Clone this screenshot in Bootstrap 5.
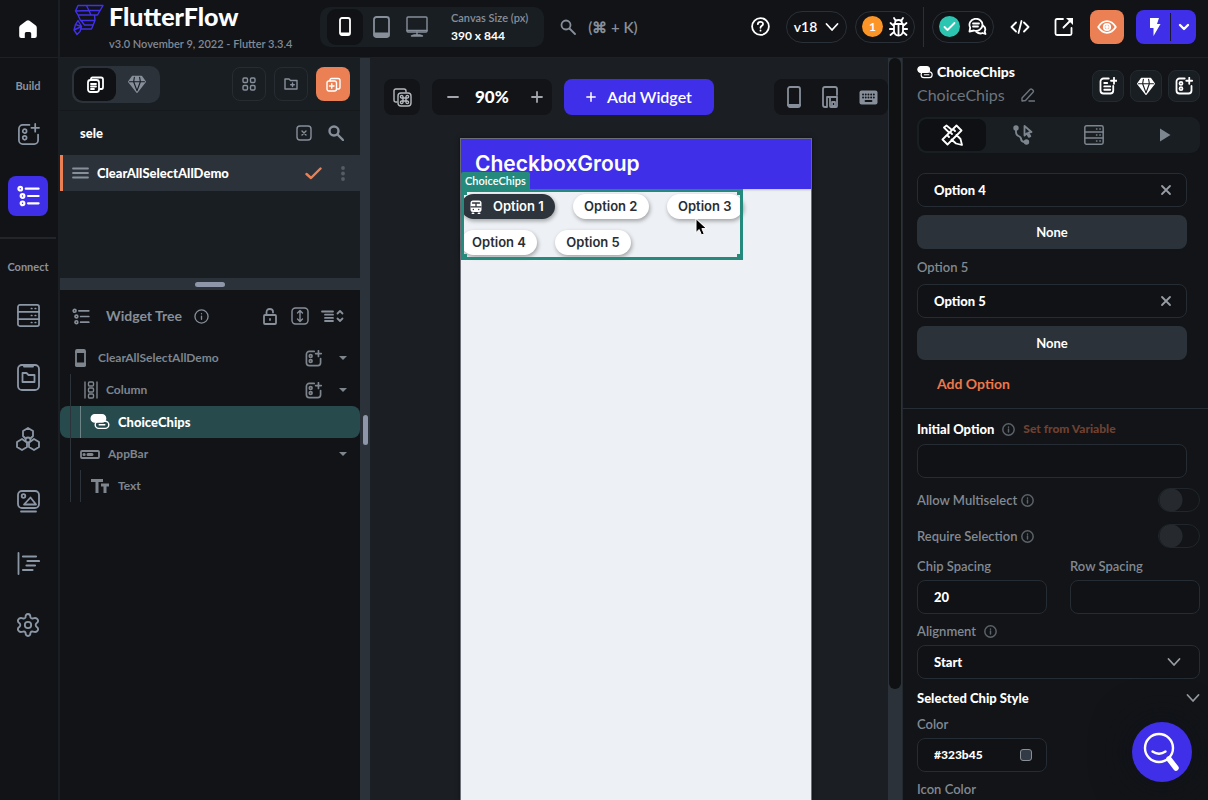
<!DOCTYPE html>
<html lang="en" data-bs-theme="dark">
<head>
<meta charset="utf-8">
<meta name="viewport" content="width=device-width, initial-scale=1">
<title>FlutterFlow</title>
<link rel="stylesheet" href="https://cdn.jsdelivr.net/npm/bootstrap@5.3.0/dist/css/bootstrap.min.css">
<style>
:root{--ink:#111317;--panel:#191e22;--raised:#2b323a;--line:#23282e;--muted:#878f9a;--brand:#3f2fe8;--coral:#ec8055;--frame:#258a7c}
body{font-family:Lato,"Liberation Sans",sans-serif;font-size:13px;line-height:20px;color:#fff;background:var(--ink);overflow:hidden}
svg{display:block;flex:none;fill:none;stroke:currentColor;stroke-width:1.8;stroke-linecap:round;stroke-linejoin:round}
.s-thin{stroke-width:1.4}
.s-bold{stroke-width:2.4}
button,a{color:inherit;text-decoration:none}
.plain{background:none;border:0;padding:0;display:flex;align-items:center;justify-content:center;color:inherit}
.dim{color:var(--muted)}
.solid{fill:currentColor;stroke:none}
/* top bar */
.topbar{height:58px;border-bottom:1px solid #1d2126}
.rail,.home{width:60px;flex:none;border-right:2px solid #1b1f24;padding-right:2px}
.brand-col{width:260px;padding-left:13px}
.brand-name{font-size:25px;font-weight:900;line-height:30px;padding-top:1px}
.version{font-size:11px;line-height:14px;font-weight:600;color:#818994;padding-top:6px}
.devices{background:var(--panel);border-radius:10px;height:40px;padding:2px 16px 2px 7px}
.dev{width:36px;height:36px;border-radius:9px}
.dev.on{background:#101215}
.canvas-size{font-size:12px;line-height:18px;margin-left:16px}
.canvas-size span{font-size:11px}
.pill{height:32px;border:1px solid #2a3037;border-radius:16px}
.dot{width:21px;height:21px;border-radius:50%;display:grid;place-items:center;font-size:12px;font-weight:700}
.vline{width:1px;height:40px;background:#2a3037}
.sq{width:34px;height:34px;border-radius:8px}
.coral{background:var(--coral)}
.run{background:var(--brand);border-radius:8px;height:34px}
/* rail */
.rail-label{height:45px;padding-top:10px;font-size:11px;font-weight:700;line-height:35px;text-align:center;color:#8b929c}
.rail-item{height:62px;width:100%;color:#8c97a6}
.rail-item span{width:40px;height:40px;border-radius:8px;display:grid;place-items:center}
.rail-item.on span{background:var(--brand);color:#fff}
.rail-rule{height:2px;background:#22262b;margin-top:10px}
/* left panel */
.side{width:300px;flex:none}
.pages{background:var(--panel);height:220px}
.tools{height:53px;padding:0 10px 0 12px;border-bottom:1px solid #15191c}
.seg{background:var(--raised);border-radius:10px;padding:2px;height:37px}
.seg button{width:42px;height:33px;border-radius:9px}
.seg .on{background:#0f1114}
.outl{border:1px solid #262c31}
.find{height:43px;padding:0 16px 0 20px}
.find input{background:none;border:0;outline:0;color:#fff;font-weight:900;min-width:0;padding:0}
.page-row{height:36px;background:var(--raised);border-left:3px solid var(--coral);padding:0 12px 0 9px;font-weight:900;margin-top:1px}
.splitter{height:12px;background:var(--raised)}
.splitter i{width:30px;height:5px;border-radius:3px;background:#8d97a9}
.tree-head{height:52px;padding:0 16px 0 12px;font-size:14px;font-weight:700}
.tree{font-size:12px;font-weight:700;color:#7e858d}
.node{height:32px;padding:0 12px;position:relative}
.node .caret{width:10px}
.node.lv1{padding-left:20px}.node.lv2{padding-left:30px}
.node.lv1::before,.node.lv2::before,.node.lv2::after{content:"";position:absolute;top:0;bottom:0;width:1px;left:10px;background:#2d333a}
.node.lv2::after{left:20px}
.node.on{background:#274a4d;border-radius:8px;color:#fff;font-size:13px;font-weight:900}
.node.on::after{background:#6d8385}
.gutter{width:10px;flex:none;background:var(--raised);padding-top:357px}
.gutter i{width:5px;height:30px;border-radius:3px;background:#8d97a9;display:block;margin-left:3px}
/* canvas */
.stage{background:#1b1f24;min-width:0}
.stage-bar{padding:21px 0 0 14px;height:80px}
.box{background:#121417;border-radius:8px;height:36px}
.zoomer{width:120px;margin:0 12px;padding:0 9px 0 15px;color:#a3a7ad}
.zoom-val{font-size:17px;font-weight:900}
.add{background:var(--brand);border-radius:8px;height:36px;width:150px;font-size:16px;font-weight:600;gap:11px}
.previews{width:114px;padding-left:13px;gap:21px}
.phone{width:352px;margin-left:90px;border:1px solid #6d7078;border-bottom:0;background:#edf0f4;color:#23272c;font-family:Inter,"Liberation Sans",sans-serif;box-shadow:0 0 4px #0008}
.appbar{height:50px;background:var(--brand);color:#fff;font-size:21px;font-weight:600;padding:0 14px;line-height:49px;box-shadow:0 1px 2px #0003}
.picked{width:282px;height:71px;padding:5px 0 0;position:relative}
.picked::after{content:"";position:absolute;inset:0;border:3px solid var(--frame);pointer-events:none}
.tag{position:absolute;left:0;top:-17px;height:18px;padding:0 4px;background:var(--frame);color:#fff;font:600 11px/18px Lato,sans-serif;border-radius:2px 2px 0 0}
.corner{position:absolute;width:6px;height:6px;background:var(--frame);z-index:1}
.chips{display:flex;flex-wrap:wrap;gap:11px 18px}
.chip{height:25px;min-width:76px;border:0;border-radius:13px;background:#fff;color:#2a2e34;font-size:13px;font-weight:600;padding:0;box-shadow:1px 2px 4px #0005;line-height:25px}
.chip.on{background:#2d343c;color:#fff;min-width:93px;padding:0 11px 0 9px;display:flex;align-items:center;gap:11px}
.pointer{position:absolute;left:234px;top:29px;z-index:2;stroke-width:1}
.vscroll{width:14px;flex:none;background:var(--raised);padding:0 1px}
.vscroll i{display:block;height:85%;background:#0f1113;border-radius:6px}
/* properties */
.props{width:306px;flex:none;border-left:1px solid #23292f;background:#121417;padding:0 8px 0 14px}
.props-head{padding-top:4px;height:59px}
.props-head .kind{font-size:14px;font-weight:900;line-height:20px}
.props-head .name{font-size:16px;line-height:26px;color:#6d747d}
.mini{width:32px;height:32px;border-radius:8px;background:var(--panel);border:1px solid #242b30}
.tabs{background:var(--panel);border-radius:9px;padding:2px;gap:4px;height:36px}
.tabs button{border-radius:8px;flex:1;color:#7d858e}
.tabs .on{background:#0e1013;color:#fff}
.field{height:34px;border:1px solid #262c33;border-radius:8px;background:#101216;padding:0 14px 0 16px;position:relative}
.field input,.field select{background:none;border:0;outline:0;color:#fff;font-weight:900;font-size:13px;padding:0;min-width:0;width:100%;appearance:none}
.field svg{color:#989da4}
.wide{margin-right:13px}
.none{height:34px;border:0;border-radius:8px;background:var(--raised);color:#fff;font-weight:700;margin-top:8px}
.lab{display:block;line-height:20px;margin-bottom:4px;font-weight:600;color:#828992}
.lab.roomy{margin:8px 0 7px}
.addopt{height:48px;color:#ee774a;font-size:14px;font-weight:700;margin-left:20px}
.rule{height:1px;background:#262d34;margin:0 -8px 0 -14px}
.strong{font-size:13px;font-weight:900;color:#fff}
.fromvar{color:#6f4132;font-size:12px;font-weight:900}
.opt{height:36px;font-weight:600;color:#828992}
.note{color:#5d636a}
.toggle{appearance:none;width:42px;height:24px;border:1px solid #20262b;border-radius:12px;background:radial-gradient(circle at 12px 11px,#262a2e 11px,transparent 12px);margin:0}
.pair{display:grid;grid-template-columns:1fr 1fr;gap:0 23px}
.swatch{width:12px;height:12px;border:1px solid #8a8f96;border-radius:3px;background:#323b45;flex:none}
.help{position:absolute;right:16px;bottom:18px;width:60px;height:60px;border-radius:50%;background:var(--brand);box-shadow:0 0 40px #10121a}
</style>
</head>
<body>
<svg width="0" height="0" class="position-absolute" aria-hidden="true">
<symbol id="addw" viewBox="0 0 24 24"><path d="M13 2H6a4 4 0 0 0-4 4v12a4 4 0 0 0 4 4h12a4 4 0 0 0 4-4v-6M19 1v8M15 5h8"/><circle cx="8" cy="8.500" r="2"/><circle cx="8" cy="15.500" r="2"/></symbol>
<symbol id="list" viewBox="0 0 24 24"><circle cx="3" cy="4" r="2"/><circle cx="5.500" cy="12" r="2"/><circle cx="5.500" cy="20" r="2"/><path d="M9 4h14M11.500 12H23M11.500 20H23"/></symbol>
<symbol id="db" viewBox="0 0 24 24"><rect x="1" y="1" width="22" height="22" rx="2"/><path d="M1 8.300h22M1 15.700h22M15 4.700h.5M19 4.700h.5M15 12h.5M19 12h.5M15 19.300h.5M19 19.300h.5"/></symbol>
<symbol id="info" viewBox="0 0 16 16"><circle cx="8" cy="8" r="7"/><path d="M8 7.500V11M8 5v.1"/></symbol>
<symbol id="gem" viewBox="0 0 24 24"><path fill="currentColor" d="M6 2h12l5 7-11 14L1 9z"/><path stroke="#191e22" stroke-width="1.500" d="M2 9h20M8.500 3 7.500 9 12 21l4.500-12-1-6"/></symbol>
<symbol id="x" viewBox="0 0 12 12"><path d="m2 2 8 8M10 2l-8 8"/></symbol>
<symbol id="chips" viewBox="0 0 24 20"><rect x="1" y="1" width="18" height="9" rx="4.500" fill="currentColor"/><rect x="6" y="9" width="17" height="9" rx="4.500"/><path d="M11 13.500h7"/></symbol>
<symbol id="down" viewBox="0 0 14 10"><path d="m1.500 2 5.500 6 5.500-6"/></symbol>
<symbol id="caret" viewBox="0 0 10 6"><path d="M1 1h8L5 5z" fill="currentColor" stroke="none"/></symbol>
<symbol id="search" viewBox="0 0 16 16"><circle cx="6" cy="6" r="4.500"/><path d="m9.500 9.500 5.500 5.500"/></symbol>
</svg>

<div class="d-flex flex-column vh-100 position-relative">
<header class="topbar d-flex flex-shrink-0">
  <a href="#" class="home d-flex align-items-center justify-content-center" aria-label="Home"><svg class="solid" width="20" height="20" viewBox="0 0 20 20"><path d="M8.500 1.800 2.200 6.600Q1.200 7.400 1.200 8.700v8.200Q1.200 19 3.300 19h3.500v-4.500q0-1.500 1.500-1.500h3.400q1.500 0 1.500 1.500V19h3.500q2.100 0 2.100-2.100V8.700q0-1.300-1-2.100l-6.300-4.800q-1.500-1.200-3 0z"/></svg></a>
  <div class="brand-col d-flex">
    <svg class="s-thin mt-1 me-1" width="32" height="32" viewBox="0 0 32 32" color="#4131e8"><path d="M5 1.500h25L24.500 11H5L2.500 7zM13.500 1.500 18 11M27 6.500H16M3 7l13-.5M5 11l2.500 5.500H22L18.500 25H7.500M21.500 11l.5 5.500M8 16.500l3.500 4.500h8M5 16.500l3.500 6-1.500 5L4 30.500 1 26l1.500-5.500zM2.500 20.500l6 2M1 26l7.500-3.500"/></svg>
    <div class="flex-shrink-0">
      <div class="brand-name">FlutterFlow</div>
      <div class="version">v3.0 November 9, 2022 - Flutter 3.3.4</div>
    </div>
  </div>
  <div class="flex-grow-1 d-flex align-items-center pb-1 pe-2 me-1" style="min-width:0">
    <div class="devices d-flex align-items-center">
      <button class="plain dev on" aria-label="Phone"><svg width="12" height="19" viewBox="0 0 12 19"><rect x="1" y="1" width="10" height="17" rx="2"/><path d="M2 16.500h8"/></svg></button>
      <button class="plain dev dim" aria-label="Tablet"><svg width="17" height="22" viewBox="0 0 17 22"><rect x="1" y="1" width="15" height="20" rx="2.500"/><path fill="currentColor" d="M1.500 17.500h14V20h-14z"/></svg></button>
      <button class="plain dev dim" aria-label="Desktop"><svg class="s-thin" width="22" height="21" viewBox="0 0 22 21"><rect x="1" y="1" width="20" height="15" rx="1"/><path d="M1 14.500h20M11 16v2.500M5.500 20q5.500-2.500 11 0z"/></svg></button>
      <div class="canvas-size"><span class="dim fw-semibold">Canvas Size (px)</span><br><b>390 x 844</b></div>
    </div>
    <button class="plain dim ms-3 gap-2 fw-semibold" style="font-size:15px"><svg width="16" height="16"><use href="#search"/></svg><span class="ms-1">(⌘ + K)</span></button>
    <div class="ms-auto d-flex align-items-center gap-2">
      <button class="plain me-2" aria-label="Help"><svg width="19" height="19" viewBox="0 0 19 19"><circle cx="9.500" cy="9.500" r="8.400"/><path d="M6.800 7.200c.2-3.400 5.400-3 5.200-.1-.1 1.700-2.500 1.700-2.500 3.700M9.500 13.500v.2"/></svg></button>
      <button class="plain pill px-2 gap-2 fw-semibold" style="font-size:14px;width:61px">v18<svg width="14" height="10"><use href="#down"/></svg></button>
      <button class="plain pill" style="width:60px;gap:6px"><span class="dot" style="background:#fb9527">1</span><svg width="19" height="20" viewBox="0 0 19 20"><path d="M5 7h9v7q-.5 4.500-4.500 4.500T5 14zM9.500 7v11M6 6.500q0-3.500 3.500-3.500T13 6.500M6.500 3.500 5 1M12.500 3.500 14 1M5 9 1.500 6M5 12H.8M5 15l-3.500 3M14 9l3.500-3M14 12h4.200M14 15l3.500 3"/></svg></button>
      <span class="vline"></span>
      <button class="plain pill" style="width:62px;gap:8px"><span class="dot" style="background:#2cc5b2"><svg width="13" height="11" viewBox="0 0 13 11"><path d="m1.500 6 3 3 7-7"/></svg></span><svg width="19" height="18" viewBox="0 0 19 18"><path d="M2.200 9.500A6.500 6 0 1 1 6 12.500L1.500 13.500zM8 13.500q3.500 3 6.500 1.500l3 1-.8-2.500Q18.500 10 15 7.500M5 5.500h6M5 8.500h5"/></svg></button>
      <button class="plain ms-2 me-3" aria-label="Code"><svg width="20" height="14" viewBox="0 0 20 14"><path d="M6 2.500 1.500 7 6 11.500M14 2.500 18.500 7 14 11.500M11.500 1l-3 12"/></svg></button>
      <button class="plain me-1" aria-label="Open"><svg width="20" height="20" viewBox="0 0 20 20"><path d="M9 2H3q-1.500 0-1.500 1.500v13Q1.500 18 3 18h13q1.500 0 1.500-1.500V11M9.500 10.500 18 2"/><path d="M12 1h7v7z" fill="currentColor" stroke="none"/></svg></button>
      <button class="plain sq coral ms-1 me-1" aria-label="Preview"><svg width="20" height="14" viewBox="0 0 20 14"><path d="M1.200 7Q5 1.200 10 1.200T18.800 7Q15 12.800 10 12.800T1.200 7z"/><circle cx="10" cy="7" r="3.200"/><circle cx="10" cy="7" r="1"/></svg></button>
      <div class="run d-flex align-items-center">
        <button class="plain ps-1" style="width:34px" aria-label="Run"><svg class="solid" width="12" height="18" viewBox="0 0 12 18"><path d="M1 0h9L8 6h3.500L4.500 18V10H1z"/></svg></button>
        <span style="width:1px;height:28px;background:#17172f"></span>
        <button class="plain" style="width:25px" aria-label="Run options"><svg class="s-bold" width="12" height="8" viewBox="0 0 12 8"><path d="m2 2 4 4 4-4"/></svg></button>
      </div>
    </div>
  </div>
</header>

<div class="d-flex flex-grow-1" style="min-height:0">
<nav class="rail">
  <div class="rail-label">Build</div>
  <button class="plain rail-item" aria-label="Add widget"><span><svg width="23" height="23"><use href="#addw"/></svg></span></button>
  <button class="plain rail-item on" aria-label="Widget tree"><span><svg class="s-bold" width="23" height="22"><use href="#list"/></svg></span></button>
  <div class="rail-rule"></div>
  <div class="rail-label">Connect</div>
  <button class="plain rail-item" aria-label="Database"><span><svg width="23" height="23"><use href="#db"/></svg></span></button>
  <button class="plain rail-item" aria-label="Schema"><span><svg width="23" height="27" viewBox="0 0 23 27"><rect x="1" y="1" width="21" height="25" rx="4"/><path d="M7 1.500v1h9v-1M5.500 9h4l2 2h6v7h-12z"/></svg></span></button>
  <button class="plain rail-item" aria-label="Components"><span><svg width="24" height="24" viewBox="0 0 24 24"><path d="M9 11 7 9V4l5-3 5 3v5l-2 2M9.500 14.500 6 12l-5 3v5l5 3 5-3v-4.500M14.500 14.500 18 12l5 3v5l-5 3-5-3v-4.500"/><circle cx="12" cy="13" r="2.500"/></svg></span></button>
  <button class="plain rail-item" aria-label="Media"><span><svg width="23" height="23" viewBox="0 0 23 23"><rect x="1" y="1" width="21" height="17" rx="4"/><circle cx="6.500" cy="6" r="1.800"/><path d="m7 14.500 6.500-7 5.500 7zM4 21.500h15"/></svg></span></button>
  <button class="plain rail-item" aria-label="Logic"><span><svg width="23" height="23" viewBox="0 0 23 23"><path d="M1.500 1v21"/><path d="M6 4.500h13M10.500 9H22M9.500 13.500H18M6 18h9.500" stroke-width="2.200"/></svg></span></button>
  <button class="plain rail-item" aria-label="Settings"><span><svg width="24" height="24" viewBox="0 0 24 24"><circle cx="12" cy="12" r="3.200"/><path d="M9.500 4.500Q9.500 1 12 1t2.500 3.500q1 1.500 2.700.8 3.200-1 4.500 1.200t-1.500 4q-1 1.500 0 3 2.800 1.800 1.500 4t-4.500 1.200q-1.700-.7-2.700.8Q14.500 23 12 23t-2.500-3.500q-1-1.500-2.700-.8-3.200 1-4.500-1.200t1.500-4q1-1.500 0-3-2.800-1.800-1.500-4t4.500-1.200q1.700.7 2.700-.8z"/></svg></span></button>
</nav>

<aside class="side d-flex flex-column">
  <section class="pages">
    <div class="tools d-flex align-items-center">
      <div class="seg d-flex"><button class="plain on" aria-label="Pages"><svg width="17" height="17" viewBox="0 0 17 17"><rect x="1" y="4" width="11" height="12" rx="2.500"/><path d="M4 4V3q0-1.500 1.500-1.500H14q2 0 2 2V11q0 2-1.500 2H13M4 8h5M4 10.500h5M4 13h3"/></svg></button><button class="plain dim" aria-label="Components"><svg width="18" height="18"><use href="#gem"/></svg></button></div>
      <div class="ms-auto d-flex gap-2">
        <button class="plain sq outl dim" aria-label="Templates"><svg class="s-thin" width="14" height="14" viewBox="0 0 14 14"><rect x="1" y="1" width="4.500" height="4.500" rx="1.200"/><rect x="8.500" y="1" width="4.500" height="4.500" rx="1.200"/><rect x="1" y="8.500" width="4.500" height="4.500" rx="1.200"/><rect x="8.500" y="8.500" width="4.500" height="4.500" rx="1.200"/></svg></button>
        <button class="plain sq outl dim" aria-label="New folder"><svg class="s-thin" width="14" height="12" viewBox="0 0 14 12"><path d="M1 1h4l1.500 1.500H13V11H1zM8.500 5v3.600M6.700 6.800h3.600"/></svg></button>
        <button class="plain sq coral" aria-label="New page"><svg class="s-thin" width="15" height="15" viewBox="0 0 15 15"><rect x="1" y="4" width="9.500" height="10" rx="2"/><path d="M4 4V3q0-1.500 1.500-1.500h6.500q2 0 2 2V10q0 2-1.500 2h-2M3.500 9H8M5.750 6.800v4.500"/></svg></button>
      </div>
    </div>
    <div class="find d-flex align-items-center">
      <input class="flex-grow-1" type="text" value="sele" aria-label="Search pages">
      <button class="plain dim" aria-label="Clear"><svg class="s-thin" width="16" height="16" viewBox="0 0 16 16"><rect x="1" y="1" width="14" height="14" rx="3"/><path d="m6 6 4 4M10 6l-4 4"/></svg></button>
      <button class="plain dim ms-3" aria-label="Search"><svg class="s-bold" width="16" height="16"><use href="#search"/></svg></button>
    </div>
    <div class="page-row d-flex align-items-center"><svg class="dim me-2" width="17" height="12" viewBox="0 0 17 12"><path d="M1 1.500h15M1 6h15M1 10.500h15"/></svg><span>ClearAllSelectAllDemo</span>
      <svg class="ms-auto s-bold" width="17" height="13" viewBox="0 0 17 13" color="#ec8055"><path d="m1.500 7 4.500 4 9.500-9.500"/></svg>
      <svg class="solid ms-3" width="10" height="15" viewBox="0 0 10 15" color="#555c65"><circle cx="5" cy="2" r="1.900"/><circle cx="5" cy="7.500" r="1.900"/><circle cx="5" cy="13" r="1.900"/></svg></div>
  </section>
  <div class="splitter d-flex align-items-center justify-content-center"><i></i></div>
  <section>
    <div class="tree-head dim d-flex align-items-center">
      <svg class="s-bold" width="18" height="17"><use href="#list"/></svg><span class="ms-3">Widget Tree</span><svg class="ms-2 s-thin" style="margin-left:12px!important" width="15" height="15"><use href="#info"/></svg>
      <svg class="ms-auto" width="14" height="17" viewBox="0 0 14 17"><rect x="1" y="7" width="12" height="9" rx="1"/><path d="M3.500 7V4.500Q3.500 1 6.800 1T10 4v.5M7 11v1"/></svg>
      <svg class="mx-3 s-thin" style="margin-inline:14px 12px!important" width="18" height="18" viewBox="0 0 18 18"><rect x="1" y="1" width="16" height="16" rx="3.500"/><path d="M9 4v10M6.500 6 9 3.500 11.500 6M6.500 12 9 14.500l2.500-2.500"/></svg>
      <svg width="23" height="14" viewBox="0 0 23 14"><path d="M1 2.500h11M4 5.700h8M4 8.900h8M4 12h8M16.500 4.500 19 2l2.500 2.500M16.500 9.500 19 12l2.500-2.500"/></svg>
    </div>
    <div class="tree">
      <div class="node d-flex align-items-center"><svg class="ms-1" style="margin-left:3px!important" width="11" height="18" viewBox="0 0 11 18"><rect x="1" y="1" width="9" height="16" rx="1"/><path d="M1 3h9M1 14.500h9v2H1z"/></svg><span class="ms-2 ps-1">ClearAllSelectAllDemo</span><svg class="ms-auto me-3 s-bold" width="17" height="17"><use href="#addw"/></svg><svg class="caret" width="10" height="6"><use href="#caret"/></svg></div>
      <div class="node lv1 d-flex align-items-center"><svg class="ms-1 s-thin" width="14" height="18" viewBox="0 0 14 18"><path d="M1 1v16M13 1v16"/><rect x="4.500" y="1" width="5" height="4" rx="1"/><rect x="4.500" y="7" width="5" height="4" rx="1"/><rect x="4.500" y="13" width="5" height="4" rx="1"/></svg><span class="ms-2">Column</span><svg class="ms-auto me-3 s-bold" width="17" height="17"><use href="#addw"/></svg><svg class="caret" width="10" height="6"><use href="#caret"/></svg></div>
      <div class="node lv2 on d-flex align-items-center"><svg width="20" height="16"><use href="#chips"/></svg><span class="ms-2">ChoiceChips</span></div>
      <div class="node lv1 d-flex align-items-center"><svg width="20" height="9" viewBox="0 0 20 9"><rect x="1" y="1" width="18" height="7" rx="1"/><path d="M4 4.500h.2M8 4.500h4" stroke-width="3"/></svg><span class="ms-2">AppBar</span><svg class="caret ms-auto" width="10" height="6"><use href="#caret"/></svg></div>
      <div class="node lv2 d-flex align-items-center"><svg width="20" height="16" viewBox="0 0 20 16" style="stroke-width:3;stroke-linecap:butt"><path d="M1 2.500h12M7 2.500V15M11 7h8M15 7v8"/></svg><span class="ms-2">Text</span></div>
    </div>
  </section>
</aside>
<div class="gutter"><i></i></div>

<main class="stage flex-grow-1 d-flex flex-column">
  <div class="stage-bar d-flex align-items-start">
    <button class="plain box" style="width:36px;color:#b5b9be" aria-label="Shortcuts"><svg class="s-thin" width="19" height="19" viewBox="0 0 19 19"><path d="M4 14H3q-2 0-2-2V3q0-2 2-2h8q2 0 2 2v1"/><rect x="5" y="5" width="13" height="13" rx="3"/><path d="M10 10h3v3h-3zM10 10H8.500A1.300 1.300 0 1 1 10 8.500zM13 10V8.500A1.300 1.300 0 1 1 14.500 10zM13 13h1.500A1.300 1.300 0 1 1 13 14.500zM10 13v1.500A1.300 1.300 0 1 1 8.500 13z"/></svg></button>
    <div class="box zoomer d-flex align-items-center"><button class="plain" aria-label="Zoom out"><svg width="12" height="12" viewBox="0 0 12 12"><path d="M1 6h10"/></svg></button><span class="zoom-val text-white ms-3">90%</span><button class="plain ms-auto" aria-label="Zoom in"><svg width="12" height="12" viewBox="0 0 12 12"><path d="M1 6h10M6 1v10"/></svg></button></div>
    <button class="plain add"><svg width="10" height="10" viewBox="0 0 12 12"><path d="M1 6h10M6 1v10"/></svg><span>Add Widget</span></button>
    <div class="box previews dim d-flex align-items-center ms-auto">
      <svg width="14" height="22" viewBox="0 0 14 22"><rect x="1" y="1" width="12" height="20" rx="2"/><path d="M1 19h12"/></svg>
      <svg width="16" height="22" viewBox="0 0 16 22"><path d="M15 9V3q0-2-2-2H3Q1 1 1 3v16q0 2 2 2h2V11h10M5 19v2"/><rect x="8" y="11" width="7" height="10" rx="1"/><path d="M10 16h3v4h-3z"/></svg>
      <svg width="19" height="15" viewBox="0 0 19 15"><rect x=".5" y=".5" width="18" height="14" rx="2" fill="currentColor" stroke="none"/><path stroke="#121417" d="M4 4.500h11M4 7.500h11" stroke-dasharray=".1 2.600" stroke-width="1.800"/><path stroke="#121417" d="M6.500 11h6"/></svg>
    </div>
  </div>
  <div class="phone flex-grow-1 position-relative">
    <div class="appbar">CheckboxGroup</div>
    <div class="picked">
      <span class="tag">ChoiceChips</span>
      <i class="corner top-0 start-0"></i><i class="corner top-0 end-0"></i><i class="corner bottom-0 start-0"></i><i class="corner bottom-0 end-0"></i>
      <div class="chips">
        <button class="chip on"><svg width="12" height="14" viewBox="0 0 12 14"><rect x=".5" y=".5" width="11" height="11.500" rx="2.500" fill="#fff" stroke="none"/><path stroke="#2d343c" stroke-width="1.300" d="M2.500 3h7M6 3.500v2.500M1 6.800h10M3.300 9.500h.1M8.700 9.500h.1"/><path d="M2.500 13.300h1M8.500 13.300h1"/></svg>Option 1</button>
        <button class="chip">Option 2</button><button class="chip">Option 3</button><button class="chip">Option 4</button><button class="chip">Option 5</button>
      </div>
      <svg class="pointer" width="13" height="19" viewBox="0 0 13 19"><path d="M1 1v13.500l3.200-3 2.300 5.500 2.700-1.200-2.300-5.200h4.300z" fill="#000" stroke="#fff"/></svg>
    </div>
  </div>
</main>
<div class="vscroll"><i></i></div>

<aside class="props">
  <div class="props-head d-flex">
    <div><div class="kind d-flex align-items-center"><svg class="me-1" width="16" height="13"><use href="#chips"/></svg>ChoiceChips</div>
      <div class="name d-flex align-items-center">ChoiceChips<svg class="ms-3 s-thin" width="14" height="14" viewBox="0 0 14 14"><path d="M1 13v-3l8-8.500q1-1 2.200 0l.8.800q1 1 0 2L4.500 12.500zM8 13h5.500"/></svg></div></div>
    <div class="ms-auto d-flex mt-1 pt-1" style="gap:6px">
      <button class="plain mini" aria-label="Save as template"><svg class="s-bold" width="18" height="18" viewBox="0 0 24 24"><path d="M13 2H6a4 4 0 0 0-4 4v12a4 4 0 0 0 4 4h9a4 4 0 0 0 4-4v-6M20 1v8M16 5h8M7 8h4M7 12.500h8M7 17h8"/></svg></button>
      <button class="plain mini" aria-label="Components"><svg width="18" height="18"><use href="#gem"/></svg></button>
      <button class="plain mini" aria-label="Add child"><svg class="s-bold" width="18" height="18"><use href="#addw"/></svg></button>
    </div>
  </div>
  <div class="tabs d-flex">
    <button class="plain on" aria-label="Design"><svg width="22" height="22" viewBox="0 0 22 22"><path d="M1.500 15.500 15.500 1.500l5 5-14 14zM6 11l2 2M9 8l2 2M12 5l2 2M8 8.500l-5-5 2.500-2L11 6M15.500 11l4 4 1.500 6-6-1.500-4.500-4"/></svg></button>
    <button class="plain" aria-label="Actions"><svg width="20" height="20" viewBox="0 0 20 20"><circle cx="3" cy="3" r="1.800" fill="currentColor"/><circle cx="13.500" cy="17" r="1.800" fill="currentColor"/><path d="M3 4v3q0 3 2.500 4T8 14q.5 3 4 3M11.500 1l7 6-3.200.6 2 3.500-1.500.8-2-3.500-2.300 2.200z"/></svg></button>
    <button class="plain" aria-label="Backend"><svg width="20" height="20"><use href="#db"/></svg></button>
    <button class="plain" aria-label="Animations"><svg class="solid" width="12" height="14" viewBox="0 0 12 14"><path d="M1 .5v13L11.500 7z"/></svg></button>
  </div>
  <div class="wide d-flex flex-column" style="padding-top:20px">
    <div class="field d-flex align-items-center"><input type="text" value="Option 4" aria-label="Option 4"><button class="plain" aria-label="Remove option 4"><svg width="12" height="12"><use href="#x"/></svg></button></div>
    <button class="none">None</button>
    <label class="lab roomy" for="o5">Option 5</label>
    <div class="field d-flex align-items-center"><input id="o5" type="text" value="Option 5"><button class="plain" aria-label="Remove option 5"><svg width="12" height="12"><use href="#x"/></svg></button></div>
    <button class="none">None</button>
  </div>
  <button class="plain addopt">Add Option</button>
  <div class="rule"></div>
  <div class="d-flex align-items-center" style="margin:10px 0 5px"><label class="strong" for="init">Initial Option</label><svg class="note ms-2" width="13" height="13"><use href="#info"/></svg><a href="#" class="fromvar ms-2">Set from Variable</a></div>
  <div class="field wide"><input id="init" type="text" class="h-100"></div>
  <div class="opt d-flex align-items-center mt-1"><label for="multi">Allow Multiselect</label><svg class="note ms-1" width="13" height="13"><use href="#info"/></svg><input id="multi" class="toggle ms-auto" type="checkbox" role="switch"></div>
  <div class="opt d-flex align-items-center"><label for="req">Require Selection</label><svg class="note ms-1" width="13" height="13"><use href="#info"/></svg><input id="req" class="toggle ms-auto" type="checkbox" role="switch"></div>
  <div class="pair" style="padding-top:2px">
    <div><label class="lab" for="cs">Chip Spacing</label><div class="field"><input id="cs" type="text" value="20" class="h-100"></div></div>
    <div><label class="lab" for="rs">Row Spacing</label><div class="field"><input id="rs" type="text" class="h-100"></div></div>
  </div>
  <div class="d-flex align-items-center" style="margin-top:7px"><label class="lab" for="al">Alignment</label><svg class="note ms-2 mb-1" width="13" height="13"><use href="#info"/></svg></div>
  <div class="field d-flex align-items-center"><select id="al"><option>Start</option></select><svg class="me-1" width="14" height="10"><use href="#down"/></svg></div>
  <div class="d-flex align-items-center" style="margin:9px 0 6px"><span class="strong">Selected Chip Style</span><button class="plain ms-auto" style="color:#989da4" aria-label="Collapse"><svg width="14" height="10"><use href="#down"/></svg></button></div>
  <div class="pair">
    <div><label class="lab" for="col">Color</label><div class="field d-flex align-items-center"><input id="col" type="text" value="#323b45" style="font-size:12px"><i class="swatch"></i></div>
    <span class="lab" style="margin-top:7px">Icon Color</span></div>
  </div>
</aside>
</div>
<button class="plain help" aria-label="Help search"><svg class="s-bold" width="38" height="40" viewBox="0 0 38 40"><circle cx="16" cy="16" r="14"/><path d="M9.500 19.500q6.500 4.500 13 0"/><path d="m26 27 7 9" stroke-width="5.500"/></svg></button>
</div>
<script src="https://cdn.jsdelivr.net/npm/bootstrap@5.3.0/dist/js/bootstrap.bundle.min.js"></script>
</body>
</html>
